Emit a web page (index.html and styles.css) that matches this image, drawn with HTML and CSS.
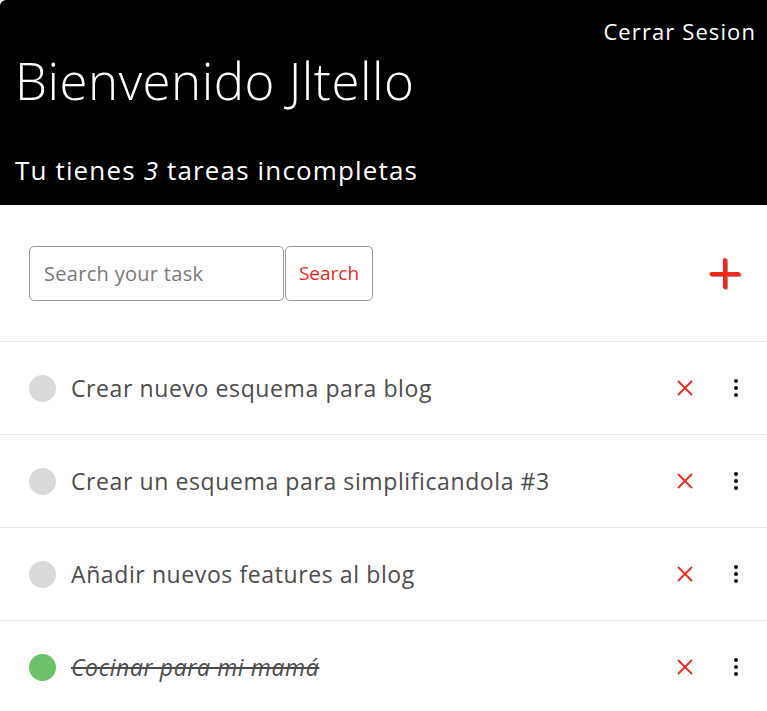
FILE: index.html
```html
<!DOCTYPE html>
<html lang="es">
<head>
<meta charset="utf-8">
<title>Tareas</title>
<link rel="stylesheet" href="styles.css">
</head>
<body>
<div class="app">
  <header class="header">
    <div class="logout-row"><span class="logout">Cerrar Sesion</span></div>
    <h1 class="title">Bienvenido Jltello</h1>
    <p class="subtitle">Tu tienes <em>3</em> tareas incompletas</p>
  </header>
  <section class="toolbar">
    <form class="search">
      <input class="search-input" type="text" placeholder="Search your task">
      <button class="search-btn" type="button">Search</button>
    </form>
    <button class="add-btn" type="button" aria-label="Añadir">
      <svg width="34" height="34" viewBox="0 0 34 34"><g stroke-linecap="round" stroke-width="4"><path d="M18 4v27M4.5 18h27" stroke="#8a2a22" opacity="0.55"/><path d="M17 3v27M3.5 17h27" stroke="#f0281e"/></g></svg>
    </button>
  </section>
  <ul class="list">
    <li class="item">
      <span class="check"></span>
      <span class="text">Crear nuevo esquema para blog</span>
      <span class="del"><svg width="18" height="18" viewBox="0 0 18 18"><path d="M2 2l14 14M16 2L2 16" stroke="#f0281e" stroke-width="1.8"/></svg></span>
      <span class="more"><i></i><i></i><i></i></span>
    </li>
    <li class="item">
      <span class="check"></span>
      <span class="text">Crear un esquema para simplificandola #3</span>
      <span class="del"><svg width="18" height="18" viewBox="0 0 18 18"><path d="M2 2l14 14M16 2L2 16" stroke="#f0281e" stroke-width="1.8"/></svg></span>
      <span class="more"><i></i><i></i><i></i></span>
    </li>
    <li class="item">
      <span class="check"></span>
      <span class="text">Añadir nuevos features al blog</span>
      <span class="del"><svg width="18" height="18" viewBox="0 0 18 18"><path d="M2 2l14 14M16 2L2 16" stroke="#f0281e" stroke-width="1.8"/></svg></span>
      <span class="more"><i></i><i></i><i></i></span>
    </li>
    <li class="item done">
      <span class="check"></span>
      <span class="text">Cocinar para mi mamá</span>
      <span class="del"><svg width="18" height="18" viewBox="0 0 18 18"><path d="M2 2l14 14M16 2L2 16" stroke="#f0281e" stroke-width="1.8"/></svg></span>
      <span class="more"><i></i><i></i><i></i></span>
    </li>
  </ul>
</div>
</body>
</html>
```
FILE: styles.css
```css
* { box-sizing: border-box; }
html, body { margin: 0; padding: 0; background: #fff; }
body { font-family: "Open Sans", "Noto Sans", sans-serif; }
.app { width: 767px; }
.header {
  background: #000;
  color: #fff;
  height: 205px;
  padding: 16px 11px 0 16px;
  border-top-left-radius: 6px;
}
.logout-row { display: flex; justify-content: flex-end; }
.logout { font-size: 22px; line-height: 30px; letter-spacing: 1.1px; }
.title { margin: 5px 0 0 -1px; font-weight: 300; font-size: 51px; line-height: 58px; letter-spacing: 0.5px; }
.subtitle { margin: 44px 0 0 -1px; font-size: 26px; font-weight: 400; line-height: 34px; letter-spacing: 1.15px; }
.subtitle em { font-style: italic; }
.toolbar {
  height: 136px;
  display: flex;
  align-items: center;
  justify-content: space-between;
  padding: 0 25px 0 29px;
}
.search { display: flex; }
.search-input {
  width: 255px; height: 55px;
  border: 1px solid #9a9a9a; border-radius: 5px;
  padding: 0 14px;
  font-family: inherit; font-size: 20px; letter-spacing: 0.3px; color: #444;
  outline: none;
}
.search-input::placeholder { color: #7a7a7a; }
.search-btn {
  width: 88px; height: 55px; margin-left: 1px;
  border: 1px solid #9a9a9a; border-radius: 5px;
  background: #fff; color: #f0281e;
  font-family: inherit; font-size: 19px;
  padding: 0;
}
.add-btn { border: 0; background: none; padding: 0; width: 34px; height: 34px; margin-top: 2px; }
.add-btn svg { display: block; }
.list { list-style: none; margin: 0; padding: 0; }
.item {
  height: 93px;
  border-top: 1px solid #e6e6e6;
  display: flex;
  align-items: center;
  padding: 0 29px;
}
.check { width: 27px; height: 27px; border-radius: 50%; background: #dadada; flex: none; }
.done .check { background: #6cc069; }
.text { margin-left: 15px; flex: 1; font-size: 23px; color: #4d4d4d; letter-spacing: 0.6px; }
.done .text { font-style: italic; text-decoration: line-through; color: #4d4d4d; }
.del { width: 18px; height: 18px; display: flex; margin-right: 40px; }
.more { display: flex; flex-direction: column; gap: 3px; width: 4px; }
.more i { width: 4px; height: 4px; border-radius: 50%; background: #111; display: block; }
```
